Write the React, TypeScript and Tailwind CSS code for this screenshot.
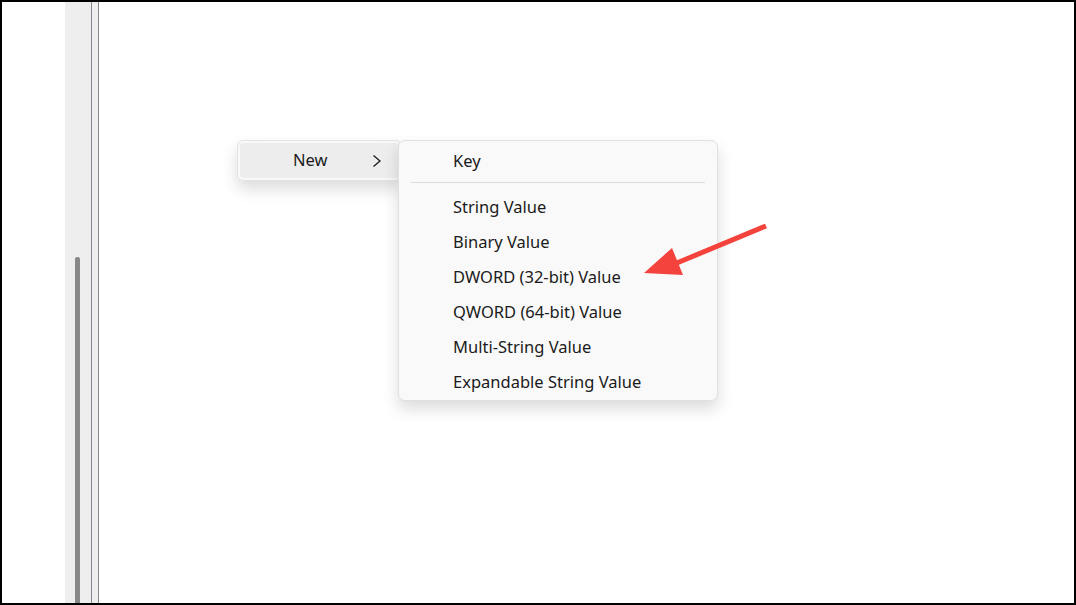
const items = [
  'String Value',
  'Binary Value',
  'DWORD (32-bit) Value',
  'QWORD (64-bit) Value',
  'Multi-String Value',
  'Expandable String Value',
];

function Chevron() {
  return (
    <svg width="10" height="14" viewBox="0 0 10 14" fill="none">
      <polyline points="1.5,1.5 8,7 1.5,12.5" stroke="#1b1b1b" strokeWidth="1.3" />
    </svg>
  );
}

export default function App() {
  return (
    <div
      className="relative h-[605px] w-[1076px] overflow-hidden border-2 border-black bg-white text-[#1b1b1b]"
      style={{ fontFamily: '"Noto Sans", "Open Sans", sans-serif' }}
    >
      <div className="flex h-full">
        <div className="w-[63px] bg-white" />
        {/* scroll gutter */}
        <div className="flex w-[26px] justify-start bg-[#eeeeee] pl-[10px]">
          <div className="mt-[255px] h-full w-[5px] rounded-t-[2px] bg-[#888888]" />
        </div>
        <div className="w-px bg-[#85858f]" />
        <div className="w-[6px] bg-[#eeeeee]" />
        <div className="w-px bg-[#85858f]" />
        <div className="flex-1 bg-white" />
      </div>

      {/* parent menu */}
      <div className="absolute left-[235px] top-[138px] w-[165px] rounded-[6px] border border-[#e3e3e3] bg-[#f9f9f9] p-[2px] shadow-[0_8px_16px_rgba(0,0,0,0.14)]">
        <div className="flex h-[35px] items-center justify-between rounded-[4px] bg-[#ededed] pl-[53px] pr-[17px] text-[16.5px]">
          <span>New</span>
          <Chevron />
        </div>
      </div>

      {/* submenu */}
      <div className="absolute left-[396px] top-[138px] w-[320px] rounded-[7px] border border-[#e0e0e0] bg-[#f9f9f9] pt-[3px] shadow-[0_8px_16px_rgba(0,0,0,0.14)] text-[16.5px]">
        <div className="flex h-[35px] items-center pl-[54px]">Key</div>
        <div className="mx-[12px] mb-[7px] mt-[3px] h-px bg-[#dcdcdc]" />
        {items.map((label) => (
          <div key={label} className="flex h-[35px] items-center pl-[54px]">
            {label}
          </div>
        ))}
      </div>

      {/* annotation arrow */}
      <svg className="absolute left-0 top-0" width="1076" height="605" viewBox="0 0 1076 605">
        <line x1="764" y1="224" x2="670" y2="263" stroke="#f4433c" strokeWidth="5" />
        <polygon points="642,271 670,246 681,273" fill="#f4433c" />
      </svg>
    </div>
  );
}
